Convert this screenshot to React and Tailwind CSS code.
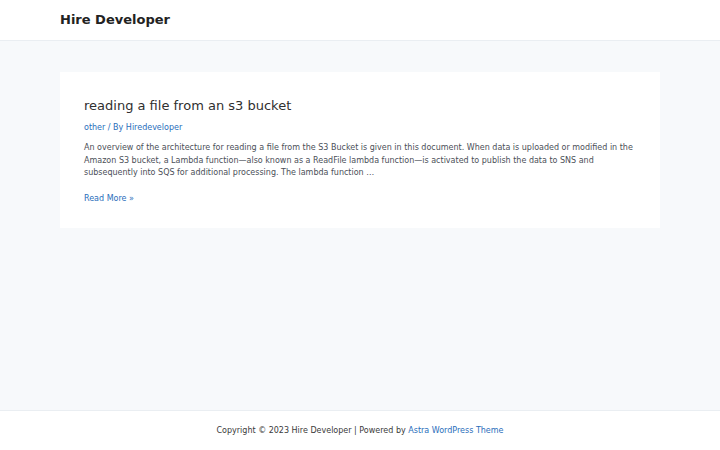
export default function App() {
  return (
    <div className="min-h-[450px] flex flex-col bg-[#f7f9fb]" style={{ fontFamily: '"DejaVu Sans", sans-serif' }}>
      <header className="h-[41px] bg-white border-b border-[#eaeef2] flex items-center px-[60px]">
        <h1 className="text-[13px] font-bold text-[#222]">Hire Developer</h1>
      </header>

      <main className="flex-1 px-[60px] pt-[31px]">
        <article className="bg-white px-[24px] pt-[25px] pb-[23px]">
          <h2 className="text-[13px] leading-[18px] text-[#2f2f2f]">reading a file from an s3 bucket</h2>
          <p className="mt-[7px] text-[8px] leading-[12px] text-[#2a6ebb]">other / By Hiredeveloper</p>
          <p className="mt-[8px] text-[8px] leading-[12.7px] text-[#4b4f58]">
            An overview of the architecture for reading a file from the S3 Bucket is given in this document. When data is uploaded or modified in the Amazon S3 bucket, a Lambda function—also known as a ReadFile lambda function—is activated to publish the data to SNS and subsequently into SQS for additional processing. The lambda function …
          </p>
          <p className="mt-[13px] text-[8px] leading-[12px] text-[#2a6ebb]">Read More »</p>
        </article>
      </main>

      <footer className="h-[40px] bg-white border-t border-[#eaeef2] flex items-center justify-center">
        <p className="text-[8px] text-[#3a3a3a]">
          Copyright © 2023 Hire Developer | Powered by <span className="text-[#2a6ebb]">Astra WordPress Theme</span>
        </p>
      </footer>
    </div>
  );
}
